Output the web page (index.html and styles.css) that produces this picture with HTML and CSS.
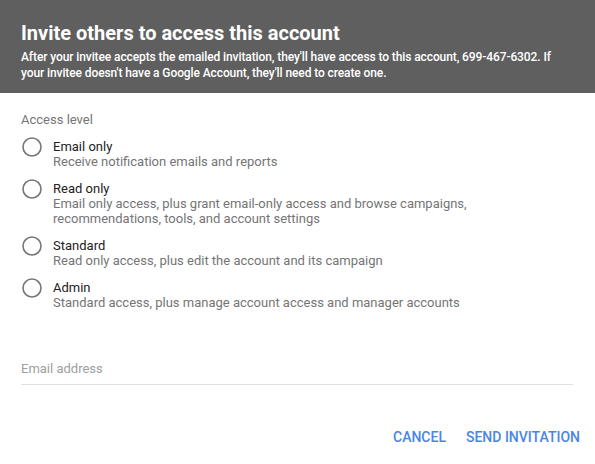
FILE: index.html
```html
<!DOCTYPE html>
<html lang="en">
<head>
  <meta charset="UTF-8">
  <meta name="viewport" content="width=device-width, initial-scale=1.0">
  <title>Invite users</title>
  <link rel="stylesheet" href="styles.css">
</head>
<body>
  <div class="dialog">
    <div class="dialog-header">
      <h1>Invite others to access this account</h1>
      <p>After your invitee accepts the emailed invitation, they'll have access to this account, 699-467-6302. If your invitee doesn't have a Google Account, they'll need to create one.</p>
    </div>

    <div class="dialog-body">
      <div class="group-label">Access level</div>

      <label class="option">
        <svg class="radio" width="20" height="20" viewBox="0 0 20 20"><circle cx="10" cy="10" r="9" /></svg>
        <span class="option-text">
          <span class="option-title">Email only</span>
          <span class="option-desc">Receive notification emails and reports</span>
        </span>
      </label>

      <label class="option">
        <svg class="radio" width="20" height="20" viewBox="0 0 20 20"><circle cx="10" cy="10" r="9" /></svg>
        <span class="option-text">
          <span class="option-title">Read only</span>
          <span class="option-desc">Email only access, plus grant email-only access and browse campaigns, recommendations, tools, and account settings</span>
        </span>
      </label>

      <label class="option">
        <svg class="radio" width="20" height="20" viewBox="0 0 20 20"><circle cx="10" cy="10" r="9" /></svg>
        <span class="option-text">
          <span class="option-title">Standard</span>
          <span class="option-desc">Read only access, plus edit the account and its campaign</span>
        </span>
      </label>

      <label class="option">
        <svg class="radio" width="20" height="20" viewBox="0 0 20 20"><circle cx="10" cy="10" r="9" /></svg>
        <span class="option-text">
          <span class="option-title">Admin</span>
          <span class="option-desc">Standard access, plus manage account access and manager accounts</span>
        </span>
      </label>

      <div class="field">
        <input type="text" placeholder="Email address">
      </div>
    </div>

    <div class="dialog-actions">
      <button class="btn">Cancel</button>
      <button class="btn">Send invitation</button>
    </div>
  </div>
</body>
</html>
```

FILE: styles.css
```css
body {
  margin: 0;
  font-family: Roboto, 'Liberation Sans', sans-serif;
  background-color: #fff;
}
.dialog {
  width: 595px;
}
.dialog-header {
  background-color: #5f5f5f;
  color: #fff;
  padding: 21px 20px 12px 21px;
}
.dialog-header h1 {
  margin: 0 0 4px;
  font-size: 20px;
  line-height: 24px;
  font-weight: 700;
}
.dialog-header p {
  margin: 0;
  font-size: 12px;
  line-height: 16px;
  font-weight: 500;
  letter-spacing: -0.1px;
}
.dialog-body {
  padding: 19px 22px 0 21px;
}
.group-label {
  font-size: 13px;
  line-height: 15px;
  color: #757575;
  margin-bottom: 10px;
}
.option {
  display: flex;
  align-items: flex-start;
  margin-bottom: 10px;
  cursor: pointer;
}
.radio {
  flex: none;
  margin-left: 1px;
  margin-right: 11px;
}
.radio circle {
  fill: none;
  stroke: #757575;
  stroke-width: 1.6;
}
.option-text {
  display: flex;
  flex-direction: column;
  padding-top: 2px;
  padding-right: 100px;
  font-size: 13px;
  line-height: 15px;
}
.option-title {
  color: #212121;
}
.option-desc {
  color: #757575;
}
.field {
  margin-top: 51px;
  border-bottom: 1px solid #e0e0e0;
  padding-bottom: 8px;
}
.field input {
  display: block;
  width: 100%;
  border: none;
  outline: none;
  padding: 0;
  font-family: inherit;
  font-size: 13px;
  line-height: 15px;
  height: 15px;
  color: #212121;
}
.field input::placeholder {
  color: #9e9e9e;
}
.dialog-actions {
  display: flex;
  justify-content: flex-end;
  gap: 4px;
  padding: 44px 7px 0 0;
}
.btn {
  background: none;
  border: none;
  padding: 0 8px;
  font-family: inherit;
  font-size: 14px;
  line-height: 16px;
  font-weight: 500;
  text-transform: uppercase;
  color: #4a85e8;
  cursor: pointer;
}
```
